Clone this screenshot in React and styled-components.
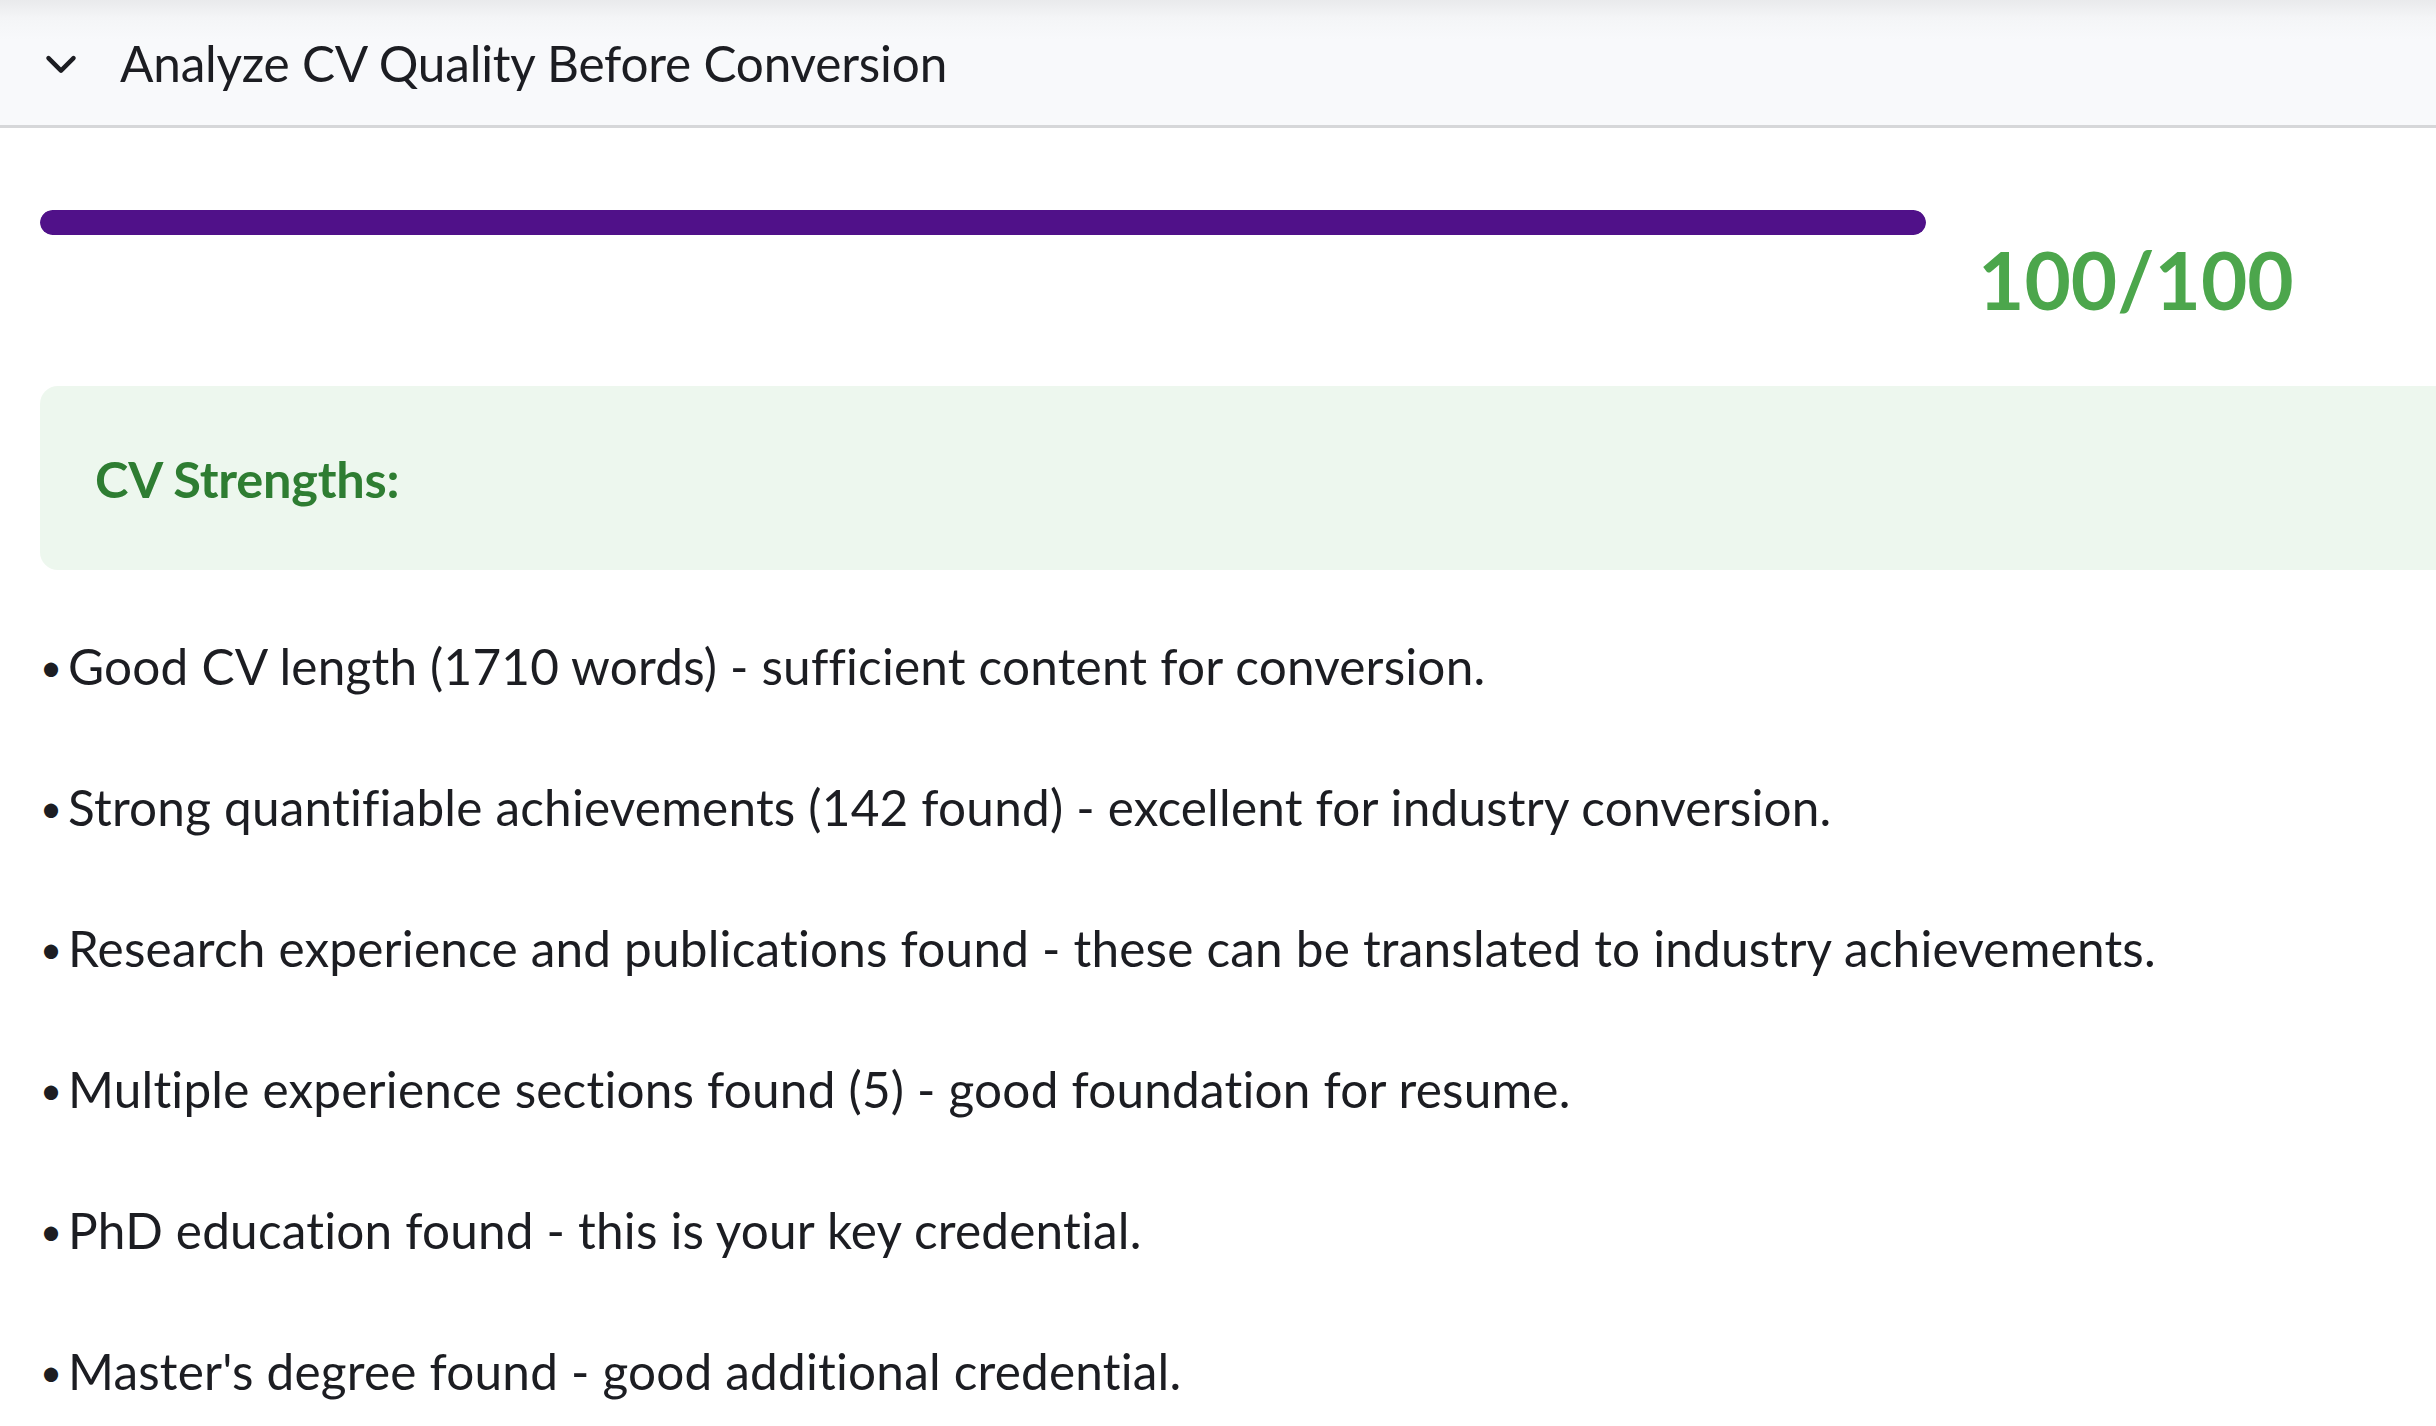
import React from 'react';
import styled, { createGlobalStyle } from 'styled-components';

const GlobalStyle = createGlobalStyle`
  html, body {
    margin: 0;
    padding: 0;
    background: #ffffff;
    overflow: hidden;
  }
  body {
    font-family: Lato, "Open Sans", sans-serif;
    color: #1c1d22;
  }
`;

const strengths = [
  'Good CV length (1710 words) - sufficient content for conversion.',
  'Strong quantifiable achievements (142 found) - excellent for industry conversion.',
  'Research experience and publications found - these can be translated to industry achievements.',
  'Multiple experience sections found (5) - good foundation for resume.',
  'PhD education found - this is your key credential.',
  "Master's degree found - good additional credential.",
];

export default function App() {
  const score = 100;

  return (
    <Page>
      <GlobalStyle />
      <Header>
        <Chevron viewBox="0 0 24 24">
          <polyline points="4.5,8.5 12,16 19.5,8.5" />
        </Chevron>
        <Title>Analyze CV Quality Before Conversion</Title>
      </Header>

      <Body>
        <ScoreRow>
          <Track>
            <Fill style={{ width: `${score}%` }} />
          </Track>
          <Score>{score}/100</Score>
        </ScoreRow>

        <StrengthsBox>
          <BoxTitle>CV Strengths:</BoxTitle>
        </StrengthsBox>

        <List>
          {strengths.map((s) => (
            <Item key={s}>
              <Bullet>•</Bullet>
              {s}
            </Item>
          ))}
        </List>
      </Body>
    </Page>
  );
}

const Page = styled.main`
  width: 100%;
  min-height: 1426px;
  background: #fff;
`;

const Header = styled.div`
  display: flex;
  align-items: center;
  gap: 39px;
  height: 125px;
  padding: 0 0 0 41px;
  background: linear-gradient(to bottom, #e9eaec 0px, #f4f5f7 18px, #f8f9fb 40px);
  border-bottom: 3px solid #d6d7d9;
  box-sizing: content-box;
`;

const Chevron = styled.svg`
  width: 40px;
  height: 40px;
  margin-top: 2px;
  fill: none;
  stroke: #1c1d22;
  stroke-width: 2.7;
  stroke-linecap: round;
  stroke-linejoin: round;
`;

const Title = styled.h2`
  margin: 0;
  font-size: 49.5px;
  font-weight: 400;
  color: #1c1d22;
  letter-spacing: -0.2px;
`;

const Body = styled.section`
  padding: 82px 0 0 40px;
`;

const ScoreRow = styled.div`
  display: grid;
  grid-template-columns: 1886px 1fr;
  column-gap: 52px;
  align-items: start;
`;

const Track = styled.div`
  height: 25px;
  border-radius: 13px;
  background: #ececf0;
  overflow: hidden;
`;

const Fill = styled.div`
  height: 100%;
  border-radius: 13px;
  background: #501189;
`;

const Score = styled.div`
  margin-top: 25px;
  font-size: 80px;
  font-weight: 700;
  line-height: 1.1;
  color: #4ca64c;
`;

const StrengthsBox = styled.div`
  display: flex;
  align-items: center;
  height: 184px;
  margin: 63px -40px 0 0;
  padding-left: 55px;
  border-radius: 18px 0 0 18px;
  background: #edf7ee;
`;

const BoxTitle = styled.h3`
  margin: 0;
  font-size: 50.5px;
  font-weight: 700;
  color: #2e7d32;
  letter-spacing: -0.2px;
`;

const List = styled.div`
  display: flex;
  flex-direction: column;
  gap: 65px;
  padding-top: 58px;
`;

const Item = styled.p`
  margin: 0;
  font-size: 49.5px;
  line-height: 76px;
  color: #1c1d22;
  letter-spacing: 0.2px;
`;

const Bullet = styled.span`
  display: inline-block;
  width: 28px;
  font-size: 38px;
  vertical-align: top;
`;
